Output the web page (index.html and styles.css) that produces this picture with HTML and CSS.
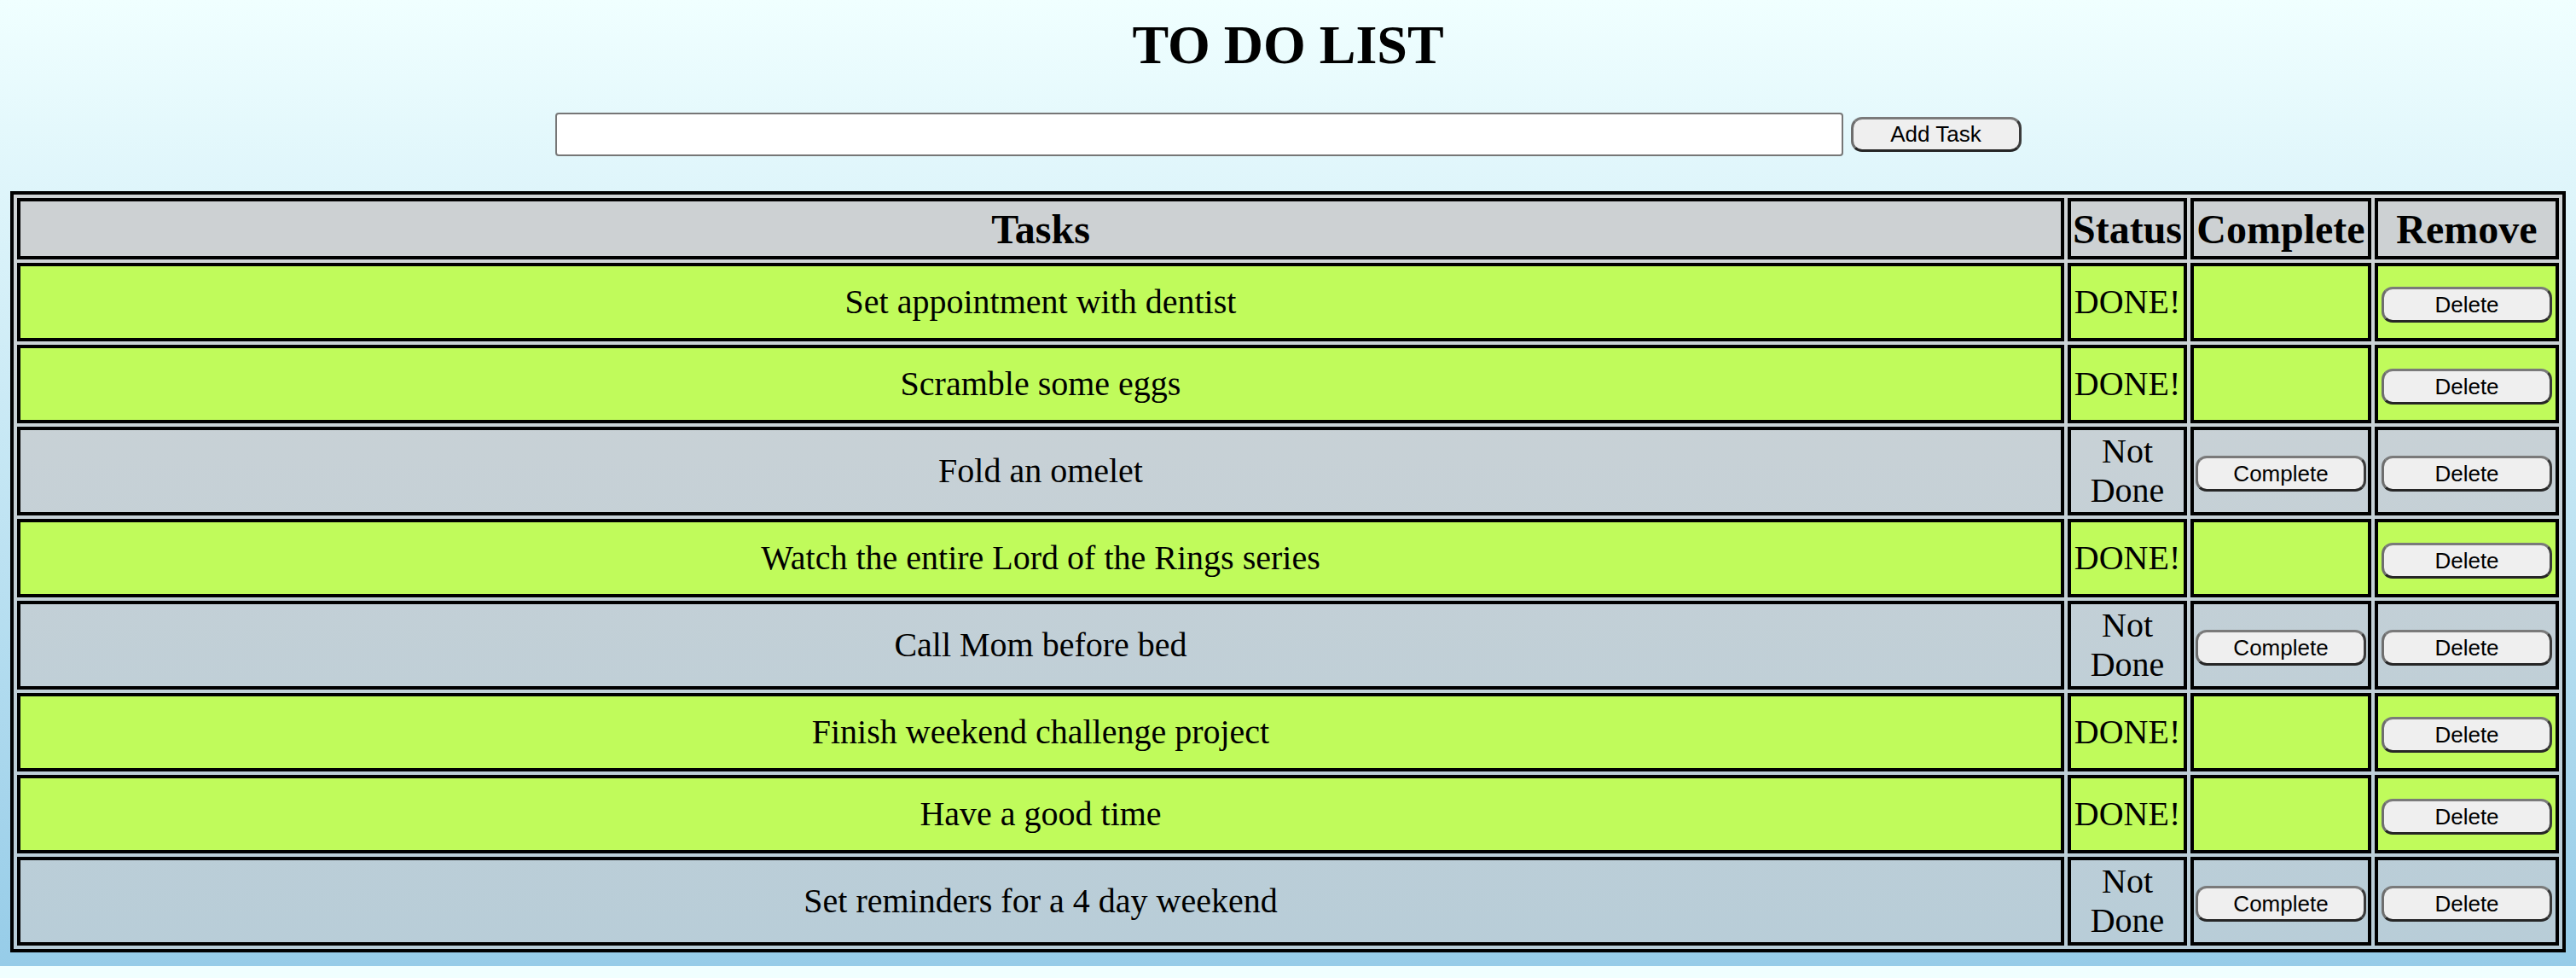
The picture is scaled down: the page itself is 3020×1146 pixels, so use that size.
FILE: index.html
```html
<!DOCTYPE html>
<html lang="en">
<head>
<meta charset="utf-8">
<title>To Do List</title>
<link rel="stylesheet" href="styles.css">
</head>
<body>
<main class="page">
  <h1 class="title">TO DO LIST</h1>
  <form class="add-form">
    <input class="task-input" type="text">
    <button class="btn btn-add" type="button">Add Task</button>
  </form>
  <table class="todo-table">
    <colgroup>
      <col class="col-tasks">
      <col class="col-status">
      <col class="col-complete">
      <col class="col-remove">
    </colgroup>
    <thead>
      <tr><th>Tasks</th><th>Status</th><th>Complete</th><th>Remove</th></tr>
    </thead>
    <tbody>
      <tr class="done"><td>Set appointment with dentist</td><td>DONE!</td><td></td><td><button class="btn" type="button">Delete</button></td></tr>
      <tr class="done"><td>Scramble some eggs</td><td>DONE!</td><td></td><td><button class="btn" type="button">Delete</button></td></tr>
      <tr class="pending"><td>Fold an omelet</td><td>Not Done</td><td><button class="btn" type="button">Complete</button></td><td><button class="btn" type="button">Delete</button></td></tr>
      <tr class="done"><td>Watch the entire Lord of the Rings series</td><td>DONE!</td><td></td><td><button class="btn" type="button">Delete</button></td></tr>
      <tr class="pending"><td>Call Mom before bed</td><td>Not Done</td><td><button class="btn" type="button">Complete</button></td><td><button class="btn" type="button">Delete</button></td></tr>
      <tr class="done"><td>Finish weekend challenge project</td><td>DONE!</td><td></td><td><button class="btn" type="button">Delete</button></td></tr>
      <tr class="done"><td>Have a good time</td><td>DONE!</td><td></td><td><button class="btn" type="button">Delete</button></td></tr>
      <tr class="pending"><td>Set reminders for a 4 day weekend</td><td>Not Done</td><td><button class="btn" type="button">Complete</button></td><td><button class="btn" type="button">Delete</button></td></tr>
    </tbody>
  </table>
</main>
</body>
</html>
```
FILE: styles.css
```css
html {
  background: #f0ffff;
}

body {
  margin: 0;
  font-family: "Liberation Serif", "Times New Roman", serif;
  color: #000;
  background: linear-gradient(#f0ffff, #96cce8);
}

.page {
  padding: 16px 12px 16px;
}

.title {
  margin: 0;
  font-size: 64px;
  line-height: 74px;
  font-weight: bold;
  text-align: center;
}

.add-form {
  display: flex;
  justify-content: center;
  align-items: center;
  gap: 9px;
  height: 51px;
  margin: 42px 0 41px;
}

.task-input {
  box-sizing: border-box;
  width: 1510px;
  height: 51px;
  border: 2px solid #767676;
  border-radius: 4px;
  background: #fff;
  padding: 0 6px;
  font-size: 26px;
}

.btn {
  box-sizing: border-box;
  width: 200px;
  height: 42px;
  padding: 0;
  font-family: "Liberation Sans", Arial, sans-serif;
  font-size: 26px;
  color: #000;
  background: #efefef;
  border: 3px solid;
  border-color: #7a7a7a #3a3a3a #262626 #6e6e6e;
  border-radius: 13px;
}

.btn-add {
  height: 41px;
}

.todo-table {
  width: 100%;
  table-layout: fixed;
  border: 4px solid #000;
  border-spacing: 4px;
  background: linear-gradient(#cfd3d5, #b8cdd8);
}

.col-tasks { width: 2400px; }
.col-status { width: 140px; }
.col-complete { width: 212px; }
.col-remove { width: 216px; }

.todo-table th,
.todo-table td {
  box-sizing: border-box;
  border: 4px solid #000;
  padding: 2px;
  text-align: center;
  vertical-align: middle;
}

.todo-table th {
  height: 72px;
  font-size: 48px;
  font-weight: bold;
  white-space: nowrap;
  background: #cdd1d3;
}

.todo-table td {
  height: 92px;
  font-size: 40px;
  line-height: 46px;
}

.todo-table tr.pending td {
  height: 104px;
}

.todo-table tr.done td {
  background: #c0fb5b;
}
```
